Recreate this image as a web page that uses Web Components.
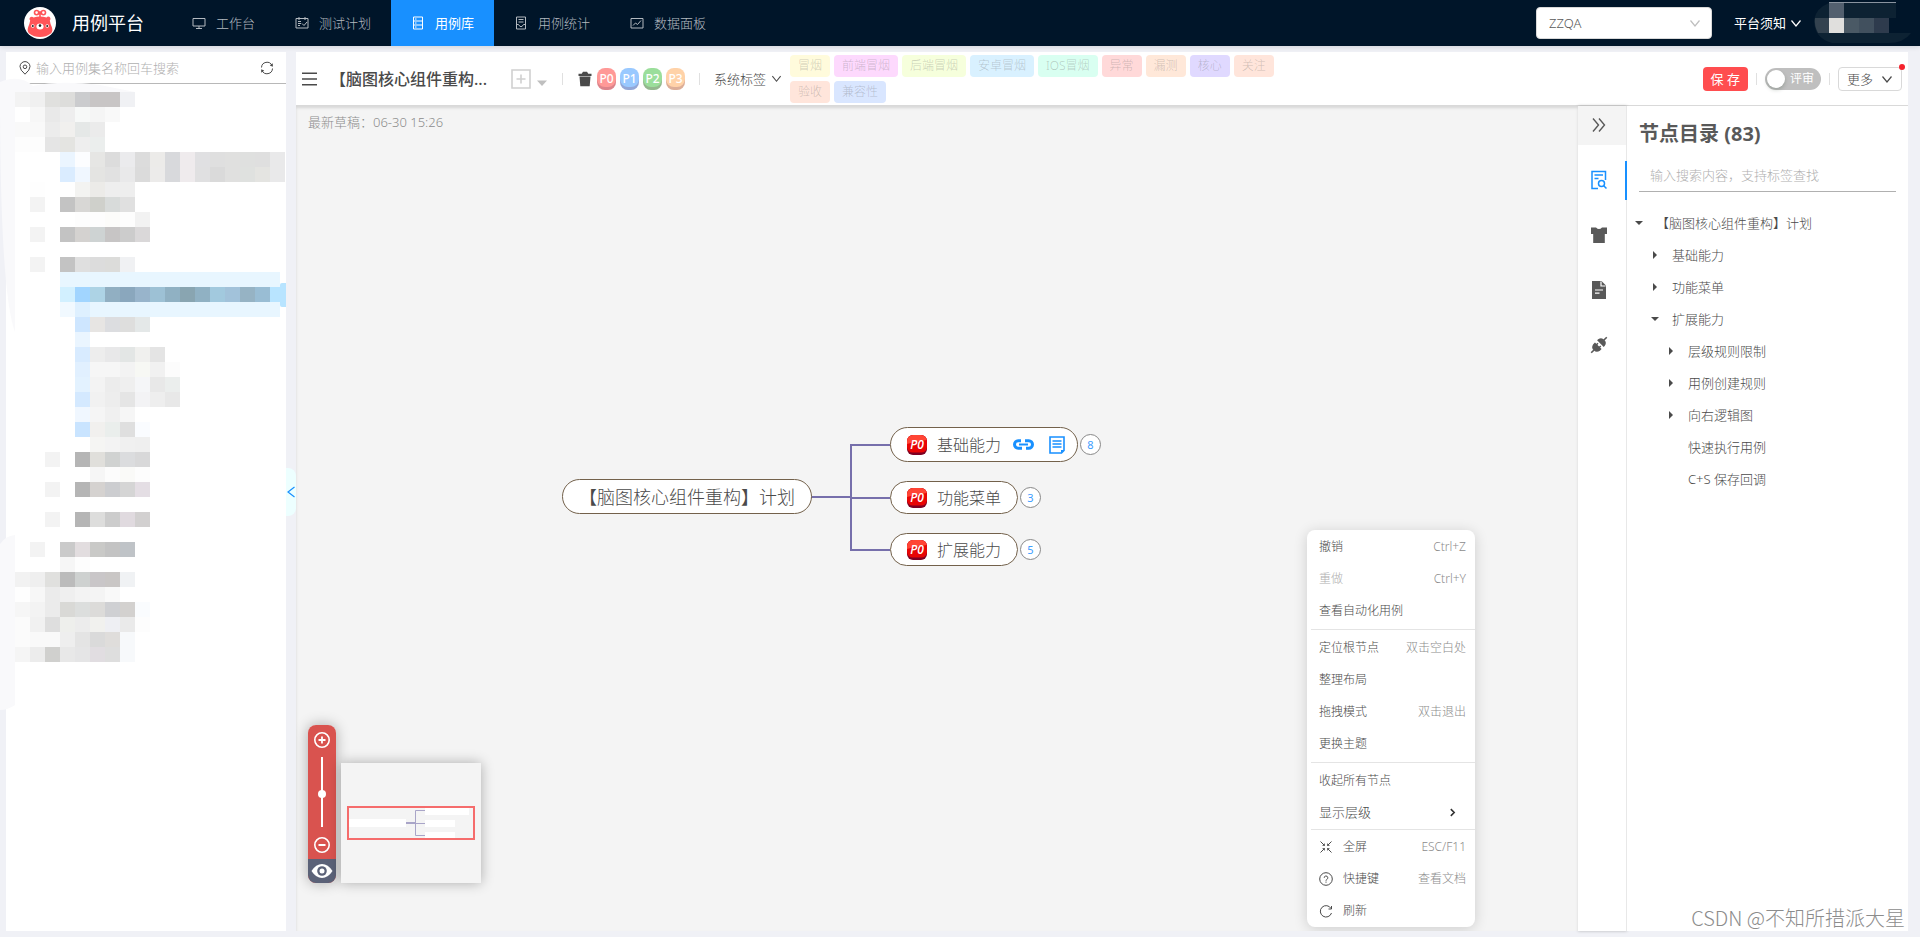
<!DOCTYPE html>
<html lang="zh-CN">
<head>
<meta charset="utf-8">
<title>用例平台</title>
<style>
html, body { height: 100%; margin: 0; }
body {
  font: 300 13px/20px "Noto Sans", "Noto Sans CJK SC", sans-serif;
  color: #4a4a4a;
  background: #f0f1f6;
}
</style>
</head>
<body>
<case-app></case-app>

<script>
const define = (name, html, setup) => {
  const tpl = document.createElement('template');
  tpl.innerHTML = `<style>*{box-sizing:border-box} button,input,select{font:inherit;color:inherit;margin:0;padding:0;border:0;background:none;outline:0} button{cursor:pointer} a{color:inherit;text-decoration:none}</style>` + html;
  customElements.define(name, class extends HTMLElement {
    constructor() {
      super();
      this.attachShadow({ mode: 'open' }).append(tpl.content.cloneNode(true));
    }
    connectedCallback() { if (setup) setup(this, this.shadowRoot); }
  });
};

/* ---------- icons: [viewBox, markup] ---------- */
const S = 'fill="none" stroke="currentColor"';
const ICONS = {
  logo: ['0 0 32 32', `<circle cx="16" cy="16" r="16" fill="#fff"/><g fill="none" stroke="#ff5458" stroke-width="1.6"><circle cx="12.600" cy="5.600" r="2.100"/><circle cx="19.400" cy="5.600" r="2.100"/><path d="M14.500 7l3-2.600M14.500 4.400L17.500 7M16 6v5"/></g><path fill="#ff5458" d="M6 10.500a2.200 2.200 0 0 1 3.500 0q6.500-2 13 0a2.200 2.200 0 0 1 3.600 0q1 1.400-.3 3 .4 3 2 6.500 1.500 4-1 6.500-4.500 3.500-10.800 3.500T5.200 26.500q-2.500-2.500-1-6.500 1.500-3.500 2-6.500-1.500-1.600-.2-3z"/><ellipse cx="16" cy="19.500" rx="3.600" ry="3" fill="#fff"/><circle cx="16" cy="18.600" r="1.300" fill="#222"/><g fill="#fff"><circle cx="8.800" cy="19" r="1.700"/><circle cx="23.200" cy="19" r="1.700"/></g><g fill="#222"><circle cx="8.800" cy="19" r="1"/><circle cx="23.200" cy="19" r="1"/></g>`],
  desktop: ['0 0 14 14', `<path ${S} d="M1 2.500h12v7.500H1zM7 10v2.500M4 12.500h6"/>`],
  schedule: ['0 0 14 14', `<path ${S} d="M1 2.500h12v9.500H1zM4 1v3M10 1v3M3 5.500h3M3 7.500h3M3 9.500h2M7 7.500l2 2 3-3.500"/>`],
  database: ['0 0 14 14', `<path ${S} d="M2.500 1h9v12h-9zM2.500 5h9M2.500 9h9M4 3h1.500M4 7h1.500M4 11h1.500"/>`],
  stats: ['0 0 14 14', `<path ${S} d="M2.500 1h9v12h-9zM4.500 3.500h5M4.500 6h5M2.500 8.500h2l1.500 2h2l1.500-2h2"/>`],
  chart: ['0 0 14 14', `<path ${S} d="M1 2.500h12v9.500H1zM3 9.500l2.500-2.500 2 1.500 3.500-4"/>`],
  down: ['0 0 12 12', `<path ${S} stroke-width="1.200" d="M1.500 3.500L6 9l4.500-5.500"/>`],
  left: ['0 0 12 12', `<path ${S} stroke-width="1.200" d="M8.500 1L2 6l6.500 5"/>`],
  right: ['0 0 8 8', `<path ${S} stroke-width="1.400" d="M2.500 1l3 3-3 3"/>`],
  pin: ['0 0 14 14', `<path ${S} d="M6 13.200Q1 9 1 5.600a5 5 0 0 1 10 0Q11 9 6 13.200z"/><circle ${S} cx="6" cy="5.800" r="1.800"/>`],
  sync: ['0 0 14 14', `<path ${S} d="M1.500 6.500A5.500 5.500 0 0 1 12 4.500M12.500 7.500A5.500 5.500 0 0 1 2 9.500"/><path fill="currentColor" d="M12.800 2.200v3.600l-3-1.300zM1.200 11.800V8.200l3 1.300z"/>`],
  menu: ['0 0 16 16', `<path ${S} stroke-width="1.600" d="M0 2.200h15M0 8h15M0 13.800h15"/>`],
  plusbox: ['0 0 20 20', `<path ${S} stroke-width="1.600" d="M1 1h18v18H1zM10 5.500v9M5.500 10h9"/>`],
  caret: ['0 0 10 10', `<path fill="currentColor" d="M0 2.500h10L5 8z"/>`],
  trash: ['0 0 14 16', `<path fill="currentColor" d="M.5 2.800h3.200L5 .8h4l1.300 2h3.200V5H.5zM1.500 5.600h11l-.8 9.600H2.300z"/>`],
  search: ['0 0 18 20', `<path ${S} stroke-width="1.500" d="M8 18.500H2v-17h13.500V10M4.500 5h8.500M4.500 8.500h4"/><circle ${S} stroke-width="1.500" cx="11.500" cy="13.500" r="3"/><path ${S} stroke-width="1.500" d="M13.700 15.700l2.800 2.800"/>`],
  shirt: ['0 0 18 18', `<path fill="currentColor" d="M1 1.500h5Q9 4.500 12 1.500h5v6.500h-2.200v9H3.200V8H1z"/>`],
  doc: ['0 0 18 20', `<path fill="currentColor" d="M2 1h9.500L16 5.500V19H2z"/><path fill="none" stroke="#fff" stroke-width="1.200" d="M11 1.500V6h4.500M5 10h8M5 13.200h4.500"/>`],
  plug: ['0 0 18 18', `<g fill="currentColor" transform="rotate(-45 9 9)"><path d="M8 4.300v9.400H5.500Q1.500 13 1.500 9t4-4.700zM11 4.300h1.500q4 .7 4 4.700t-4 4.700H11z"/><path d="M-2 8.200h4v1.600h-4zM16 8.200h4v1.600h-4z"/><path d="M7 6.300h2.500v1.500H7zM7 10.200h2.500v1.500H7z"/></g>`],
  link: ['0 0 21 11', `<path ${S} stroke-width="3" d="M9 9.200H5.200a3.700 3.700 0 0 1 0-7.400H8M12 1.800h3.800a3.700 3.700 0 0 1 0 7.400H13"/><path ${S} stroke-width="2" d="M6 5.500h9"/>`],
  note: ['0 0 16 18', `<path ${S} stroke-width="1.600" d="M1 1h14v13.500L12.500 17H1z"/><path ${S} stroke-width="1.300" d="M3.500 5h9M3.500 8h9M3.500 11h9"/><path fill="currentColor" d="M12 14h3L12 17z"/>`],
  p0: ['0 0 20 20', `<defs><clipPath id="c"><rect width="20" height="20" rx="6"/></clipPath></defs><g clip-path="url(#c)"><path fill="#7d0022" d="M0 0h20v20H0z"/><rect width="20" height="17.500" rx="5.500" fill="#e80505"/><path fill="#ff4535" d="M0 0h20v5Q10 6 0 9z"/></g>`],
  full: ['0 0 14 14', `<path ${S} d="M1.500 1.500l4 4M12.500 1.500l-4 4M1.500 12.500l4-4M12.500 12.500l-4-4"/><path ${S} stroke-width=".8" d="M5.500 3.500v2h-2M8.500 3.500v2h2M5.500 10.500v-2h-2M8.500 10.500v-2h2"/>`],
  help: ['0 0 14 14', `<circle ${S} cx="7" cy="7" r="6.300"/><path ${S} d="M5.200 5.800a1.800 1.800 0 1 1 2.600 1.600Q7 7.800 7 8.700M7 9.600v1.100"/>`],
  reload: ['0 0 14 14', `<path ${S} d="M12 4.500A5.700 5.700 0 1 0 12.500 9M12.500 2v3H9.500"/>`],
  dbl: ['0 0 14 14', `<path ${S} stroke-width="1.400" d="M1 .5L6.500 7 1 13.500M7 .5L12.500 7 7 13.500"/>`],
  zoomin: ['0 0 18 18', `<circle ${S} stroke-width="1.600" cx="9" cy="9" r="7.200"/><path ${S} stroke-width="1.800" d="M9 5.500v7M5.500 9h7"/>`],
  zoomout: ['0 0 18 18', `<circle ${S} stroke-width="1.600" cx="9" cy="9" r="7.200"/><path ${S} stroke-width="1.800" d="M5.500 9h7"/>`],
  eye: ['0 0 22 16', `<path fill="currentColor" d="M.5 8Q5 1 11 1t10.500 7Q17 15 11 15T.5 8z"/><circle cx="11" cy="8" r="4.800" fill="#5b6278"/><circle cx="11" cy="8" r="2.500" fill="currentColor"/>`],
};
define('app-icon', `<style>
:host{display:inline-flex;flex:none;width:14px;height:14px}
svg{width:100%;height:100%;overflow:visible}
</style><svg aria-hidden="true"></svg>`, (el, root) => {
  const [box, body] = ICONS[el.getAttribute('name')];
  const svg = root.querySelector('svg');
  svg.setAttribute('viewBox', box);
  svg.innerHTML = body;
});
const makeIcon = name => {
  const icon = document.createElement('app-icon');
  icon.setAttribute('name', name);
  return icon;
};

/* ---------- header ---------- */
define('nav-item', `<style>
:host{display:flex}
a{display:flex;align-items:center;gap:10px;padding:0 20px;height:46px;color:#b4bac0}
:host([active]) a{background:#1890ff;color:#fff;font-weight:400}
</style><a href="#"><slot></slot></a>`, (el, root) => {
  root.querySelector('a').prepend(makeIcon(el.getAttribute('icon')));
});
define('app-header', `<style>
:host{display:flex;align-items:center;height:46px;background:#001529;color:#fff;padding:0 9px 0 24px;box-shadow:0 1px 5px rgba(0,21,41,.14);position:relative}
.logo{width:32px;height:32px}
h1{margin:0 28px 0 16px;font-size:18px;line-height:24px;font-weight:400}
nav{display:flex;flex:1}
.team{position:relative;display:flex;align-items:center;width:176px}
select{appearance:none;width:100%;height:32px;padding:0 12px;background:#fff;border:1px solid #d9d9d9;border-radius:4px;color:#595959}
.team app-icon{position:absolute;right:11px;color:#bfbfbf;pointer-events:none}
.team app-icon,.note app-icon{width:12px;height:12px}
.note{display:flex;align-items:center;gap:4px;margin:0 12px 0 22px;font-weight:400}
.user{width:97px;height:42px}
</style>
<app-icon class="logo" name="logo"></app-icon><h1>用例平台</h1>
<nav><nav-item icon="desktop">工作台</nav-item><nav-item icon="schedule">测试计划</nav-item><nav-item icon="database" active>用例库</nav-item><nav-item icon="stats">用例统计</nav-item><nav-item icon="chart">数据面板</nav-item></nav>
<label class="team"><select aria-label="团队"><option>ZZQA</option></select><app-icon name="down"></app-icon></label>
<button class="note">平台须知<app-icon name="down"></app-icon></button>
<svg class="user" viewBox="0 0 97 42"><path fill="#0d2233" d="M15 1L82 0V16H75V31L97 31Q90 41 74 41H18Q0 36 0 18Q2 6 15 1z"/><path fill="#53606f" d="M15 1h15v15H15z"/><path fill="#8a94a0" d="M15 0h67v1H15z"/><path fill="#33424f" d="M1 16h14v15H4Q0 24 1 16z"/><path fill="#e0dfdd" d="M15 16h15v15H15z"/><path fill="#4a5965" d="M30 16h15v15H30z"/><path fill="#41505e" d="M45 16h15v15H45z"/><path fill="#2e3b4d" d="M60 16h15v15H60z"/></svg>`);

/* ---------- case tree panel ---------- */
/* each entry: row, first column, cell colours; one cell is 15px square */
const CELLS = `0 1 f3f3f3 f0f0f0 e0e0de dddddb cbccce c8c5c5 c8c5c5 f0f1f4
1 2 f7f7f7 e9e9e9 eeeeee f7f9f8 f5f5f5 f9f9f9
2 1 f9f9f9 f9f9f9 ececec f1f0ee e5e8e7 ebebeb
3 1 fdfdfd fdfdfd e5e5e5 e4e4e1 eeeeee ebeeed
4 4 ebf5ff fcfdff e6e6e4 dcdcdc ebebed dcdcdc ecebe9 d8d9dc efebed e0e0e2 dfdfdf e0e0df dfe0df dfdfdf e9e9ea
5 4 daecff f0f7ff e4e4e2 e1e1e1 e9e9ea dbdbdb ecebea d8d9dc efebed e0e0e1 dadada e0e0df dfe1df e4e4e1 e9e9ea
6 2 fefefe ffffff fefefe f3f3f1 ecebe8 eeeeee eeeeee
7 2 f3f3f3 ffffff c3c3c3 d8d7d5 cfd0cb d8dbda e0e0e0
8 5 fdfdfd fdfdfd fcfcfa fdfdfd f2f2f2
9 2 f3f3f3 ffffff c3c3c3 d4d2d0 ced3d3 c7c5c5 cccccc dad8d9
11 2 f3f3f3 ffffff c3c3c3 dfdfdf dcdcdc dcdcda f0f1f3
13 4 d2f0ff a1d5ff add3e5 91afc2 8aa7bd 98b4cb 9dc1d5 90b1c3 89a5b1 90b1c3 a2c9de a2c2da 96b3c4 99bdd4 b8e4ff
14 4 f1f9ff def0ff
15 5 cee6ff e7e5e3 dcdde0 dededd e4e8e8
16 5 eaf5ff
17 5 d8ebff ededed e8e8e9 e3e6e5 f0f0ee e4e4e4
18 5 e1f0ff f6f6f6 f6f6f6 f3f3f3 f7f8f4 f1f1f1 fcfcfc
19 5 e3f2ff f3f3f3 ececec efefef f5f6f8 e8e8e8 ebeeed
20 5 d4e9ff f1f1f1 ededed e5e5e5 f3f3f5 eeeeee e8e8e8
21 5 f0f7ff f5f5f5 f0f0f0 f6f6f6
22 5 c9e4ff f1f0ee eaeeec dfdfdf fafcff
23 6 f5f5f3 f3f3f3 f0f0f0 efefef
24 3 f3f3f3 ffffff b5b5b5 e0dfdb d0d2d1 dbdcde d8d8d9
25 6 f6f6f6 fcfcfc fafaf8 fdfdfd
26 3 f3f3f3 ffffff b5b5b5 d5d2d0 cccdd0 d5d5d5 e4dee4
28 3 f3f3f3 ffffff b5b5b5 dddddc cccccc e0dadf d2d0d0
30 2 f3f3f3 ffffff cacaca e2dddf c9c9c7 c3c3c3 bfc3c7
31 4 f6f6f6 fdfdfd
32 1 f2f2f2 efefef e0e0de bbbbbb ced1d0 c9c6c8 c9c6c5 f0f2f4
33 1 fefefe f7f7f7 ebebeb efefef f3f3f3 f4f4f4 f9f9f9
34 1 f6f6f6 f3f3f3 ebebeb d9d9d6 dcdedd dcdbd9 cfd0d3 d3d1cf fafcfe
35 1 fbfbfb f1f1f1 dedede eeefec ececec f1f1ee eeeff3 eaeaea fdfdfd
36 1 fbfbfb f9f9f9 f9f9f9 eeeeee e4e4e4 dadada dfdddb f7f9fb
37 1 f5f5f5 ececec d0d0ce e8e8e8 e5e5e6 e1dde1 dedede f7f9fb`;
define('case-tree', `<style>
:host{display:flex;flex-direction:column;background:#fff}
label{display:flex;align-items:center;gap:3px;height:31px;padding:0 12px 0 13px}
input{flex:1;min-width:0;height:24px}
input::placeholder{color:#b0b0b0;opacity:1}
hr{margin:0 0 0 22px;border:0;border-top:1px solid #b8b8b8;width:auto}
svg{display:block;flex:1;width:100%;overflow:visible}
</style>
<label><app-icon name="pin"></app-icon><input aria-label="用例集" placeholder="输入用例集名称回车搜索"><app-icon name="sync"></app-icon></label>
<hr>
<svg aria-hidden="true"><g transform="translate(-6 8)"><path fill="#f9f9fb" d="M0-10Q20-18 33-6 60-12 100-7L135 0V10H15V240Q0 200 0 0z"/><path fill="#f9f9fb" d="M0 452Q5 444 15 443V613Q8 618 0 618z"/><path fill="#e8f6ff" d="M60 180h220v45H60z"/><g id="cells" shape-rendering="crispEdges"></g><path fill="#b8e4ff" d="M286 191v24h-4q-2 0-2-2v-20q0-2 2-2z"/></g></svg>`, (el, root) => {
  root.querySelector('#cells').innerHTML = CELLS.split('\n').map(line => {
    const [row, col, ...colors] = line.split(' ');
    return colors.map((c, i) => `<rect x="${(+col + i) * 15}" y="${row * 15}" width="15" height="15" fill="#${c}"/>`).join('');
  }).join('');
});

/* ---------- toolbar ---------- */
define('priority-badge', `<style>
:host{display:flex}
button{width:19px;height:22px;border-radius:8px;background:var(--c);box-shadow:inset 0 -3px 0 rgba(90,20,60,.28);color:#fff;font-size:12px;line-height:20px;font-weight:500;opacity:.75;text-align:center}
</style><button><slot></slot></button>`);
define('tag-chip', `<style>
:host{display:flex}
button{height:22px;padding:0 8px;border-radius:4px;background:var(--c);color:rgba(89,89,89,.3);font-size:12px;line-height:22px}
</style><button><slot></slot></button>`);
define('tool-bar', `<style>
:host{display:flex;align-items:center;height:54px;background:#fff;border-bottom:1px solid #d9d9d9;padding:0 6px}
button{display:flex;align-items:center}
.menu app-icon{width:16px;height:16px}
h2{margin:0 21px 0 12px;width:160px;font-size:16px;line-height:24px;font-weight:500;white-space:nowrap}
.add{gap:6px;color:#d0d0d0}.add app-icon{width:20px;height:20px}.add .c{width:10px;height:10px;margin-top:8px;color:#bfbfbf}
i{width:1px;height:12px;background:#e0e0e0;flex:none}
.add + i{margin-left:15px}
.pri{display:flex;align-items:center;gap:4px;margin:0 14px 0 15px}
.pri app-icon{width:14px;height:16px;margin-right:1px}
.sys{gap:5px;margin-left:14px;margin-right:8px}.sys app-icon{width:11px;height:11px}
.tags{display:flex;flex-wrap:wrap;gap:4px;width:500px}
.right{display:flex;align-items:center;gap:8px;margin-left:auto}
.save{height:24px;padding:0 8px;background:#ff4d4f;color:#fff;border-radius:4px;font-weight:400}
.switch{position:relative;display:flex;align-items:center;justify-content:flex-end;width:56px;height:22px;padding:1px 7px 0;border-radius:11px;background:#bfbfbf;color:#fff;font-size:12px;font-weight:400}
.switch input{appearance:none;position:absolute;left:2px;top:2px;width:18px;height:18px;border-radius:9px;background:#fff;box-shadow:0 2px 4px rgba(0,35,11,.2)}
.more{position:relative;height:24px;width:64px;justify-content:space-between;padding:0 8px;border:1px solid #d9d9d9;border-radius:4px}
.more app-icon{width:12px;height:12px}
.more::after{content:"";position:absolute;right:-4px;top:-4px;width:6px;height:6px;border-radius:3px;background:#f5222d}
</style>
<button class="menu" aria-label="菜单"><app-icon name="menu"></app-icon></button>
<h2>【脑图核心组件重构...</h2>
<button class="add" aria-label="新增"><app-icon name="plusbox"></app-icon><app-icon class="c" name="caret"></app-icon></button>
<i></i>
<div class="pri"><button aria-label="删除"><app-icon name="trash"></app-icon></button><priority-badge style="--c:#ff7875">P0</priority-badge><priority-badge style="--c:#78b7ff">P1</priority-badge><priority-badge style="--c:#7ad47a">P2</priority-badge><priority-badge style="--c:#ffc48c">P3</priority-badge></div>
<i></i>
<button class="sys">系统标签<app-icon name="down"></app-icon></button>
<div class="tags"><tag-chip style="--c:#fffbdc">冒烟</tag-chip><tag-chip style="--c:#fdd9fd">前端冒烟</tag-chip><tag-chip style="--c:#f6ffdc">后端冒烟</tag-chip><tag-chip style="--c:#d9f1ff">安卓冒烟</tag-chip><tag-chip style="--c:#d9fff1">IOS冒烟</tag-chip><tag-chip style="--c:#ffd9d9">异常</tag-chip><tag-chip style="--c:#ffe8d9">漏测</tag-chip><tag-chip style="--c:#e0d9ff">核心</tag-chip><tag-chip style="--c:#ffe5db">关注</tag-chip><tag-chip style="--c:#ffe5db">验收</tag-chip><tag-chip style="--c:#d9e6ff">兼容性</tag-chip></div>
<div class="right"><button class="save">保 存</button><i></i><label class="switch"><input type="checkbox" role="switch">评审</label><i></i><button class="more">更多<app-icon name="down"></app-icon></button></div>`);

/* ---------- mind map ---------- */
define('mind-node', `<style>
:host{position:absolute;display:flex;align-items:center;gap:2px}
.box{display:flex;align-items:center;gap:10px;height:33px;padding:0 16px;border:1px solid #73614b;border-radius:18px;background:#fff;font-size:16px;line-height:24px;white-space:nowrap}
:host([root]) .box,:host([tall]) .box{height:35px}
:host([tall]) .box{padding-right:12px;gap:12px}
:host([tall]) .p{margin-right:-2px}
:host([root]) .box{font-size:18px;padding:0 16px}
.p{position:relative;display:none;width:20px;height:20px;align-items:center;justify-content:center;color:#fff;font:italic 600 12px/20px "Open Sans",sans-serif}
.p app-icon{position:absolute;inset:0;width:20px;height:20px}
.p span{position:relative}
:host([count]) .p{display:flex}
.n{display:none;width:21px;height:21px;border:1px solid #888;border-radius:11px;background:#fff;color:#409eff;font-size:11px;line-height:19px;text-align:center;font-weight:400}
:host([count]) .n{display:block}
</style><div class="box"><span class="p"><app-icon name="p0"></app-icon><span>P0</span></span><slot></slot><slot name="extra"></slot></div><span class="n"></span>`, (el, root) => {
  const n = root.querySelector('.n'), p = root.querySelector('.p');
  if (el.hasAttribute('count')) n.textContent = el.getAttribute('count'); else { n.remove(); p.remove(); }
});
define('zoom-panel', `<style>
:host{display:flex;align-items:flex-end;gap:5px}
.bar{display:flex;flex-direction:column;align-items:center;width:28px;border-radius:8px;overflow:hidden;background:#d9534f;color:#fff}
.wrap{border-radius:8px;box-shadow:0 0 14px rgba(0,0,0,.3)}
button{display:flex;justify-content:center;align-items:center;width:28px;height:29px}
.bar app-icon{width:18px;height:18px}
input{appearance:none;writing-mode:vertical-lr;width:8px;height:70px;margin:3px 0;background:linear-gradient(#fff,#fff) center/2px 100% no-repeat}
input::-webkit-slider-thumb{appearance:none;width:8px;height:8px;border-radius:4px;background:#fff}
.eye{height:24px;background:#5b6278}
.bar .eye app-icon{width:22px;height:16px}
.mini{width:140px;height:120px;background:#f4f4f4;box-shadow:0 0 12px rgba(0,0,0,.3)}
.mini svg{display:block}
</style><div class="wrap"><div class="bar"><button aria-label="放大"><app-icon name="zoomin"></app-icon></button><input type="range" aria-label="缩放" value="53"><button aria-label="缩小"><app-icon name="zoomout"></app-icon></button><button class="eye" aria-label="导航"><app-icon name="eye"></app-icon></button></div></div>
<div class="mini"><svg width="140" height="120"><g fill="#fff"><path d="M8 56h57v8H8zM84 45h44v7H84zM84 57h30v7H84zM84 69h30v7H84z"/></g><path fill="none" stroke="#a9a5c8" d="M84 47.500h-9.500v25H84M75 60.500h9"/><path stroke="#a9a5c8" stroke-width="2" d="M65 60h10"/><rect x="7" y="44" width="126" height="32" fill="none" stroke="#f56c6c" stroke-width="2"/></svg></div>`);

define('menu-row', `<style>
:host{display:flex}
button{display:flex;align-items:center;width:100%;height:32px;padding:0 9px 0 12px;font-size:12px;line-height:20px}
app-icon{margin-right:10px}
.k{margin-left:auto;color:#8c8c8c}
:host([disabled]) button{color:#b0b0b0}
:host([large]) button{font-size:13px;padding-bottom:2px}
.k app-icon{width:9px;height:9px;margin:0 9px 0 0;color:#333}
</style><button><slot></slot><span class="k"></span></button>`, (el, root) => {
  const b = root.querySelector('button'), k = root.querySelector('.k');
  if (el.hasAttribute('icon')) b.prepend(makeIcon(el.getAttribute('icon')));
  if (el.hasAttribute('large')) k.append(makeIcon('right'));
  else k.textContent = el.getAttribute('hint') || '';
});
define('context-menu', `<style>
:host{display:block;width:168px;padding-top:1px;background:#fff;border-radius:8px;box-shadow:0 2px 14px rgba(0,0,0,.16)}
hr{margin:2px 0 2px 4px;border:0;border-top:1px solid #e4e4e4}
hr.t{margin:0 0 1px 4px}
</style>
<menu-row hint="Ctrl+Z">撤销</menu-row><menu-row hint="Ctrl+Y" disabled>重做</menu-row><menu-row>查看自动化用例</menu-row><hr>
<menu-row hint="双击空白处">定位根节点</menu-row><menu-row>整理布局</menu-row><menu-row hint="双击退出">拖拽模式</menu-row><menu-row>更换主题</menu-row><hr>
<menu-row>收起所有节点</menu-row><menu-row large>显示层级</menu-row><hr class="t">
<menu-row icon="full" hint="ESC/F11">全屏</menu-row><menu-row icon="help" hint="查看文档">快捷键</menu-row><menu-row icon="reload">刷新</menu-row>`);
define('mind-canvas', `<style>
:host{position:relative;display:block;background:#f4f4f4;overflow:hidden;box-shadow:inset 0 2px 3px rgba(0,0,0,.12)}
.draft{margin:0;padding:6px 12px;color:#8c8c8c}
.lines{position:absolute;left:0;top:0;width:100%;height:100%}
zoom-panel{position:absolute;left:12px;bottom:48px}
context-menu{position:absolute;left:1011px;top:424px}
.e{display:flex;gap:15px;align-items:center;color:#1890ff}
.e app-icon{width:21px;height:11px}
.e app-icon + app-icon{width:16px;height:18px}
</style>
<p class="draft">最新草稿：06-30 15:26</p>
<svg class="lines" aria-hidden="true"><path fill="none" stroke="#766fab" stroke-width="2" d="M515 391h40M594 339h-39v105h39M555 392h39"/></svg>
<mind-node root style="left:266px;top:373px">【脑图核心组件重构】计划</mind-node>
<mind-node tall count="8" style="left:594px;top:321px">基础能力<span slot="extra" class="e"><app-icon name="link"></app-icon><app-icon name="note"></app-icon></span></mind-node>
<mind-node count="3" style="left:594px;top:375px">功能菜单</mind-node>
<mind-node count="5" style="left:594px;top:427px">扩展能力</mind-node>
<zoom-panel></zoom-panel>
<context-menu></context-menu>`);

/* ---------- right side ---------- */
define('side-rail', `<style>
:host{display:flex;flex-direction:column;gap:16px;width:49px;background:#fff;border-right:1px solid #e8e8e8;box-shadow:0 0 3px rgba(0,0,0,.25)}
button{position:relative;display:flex;align-items:center;justify-content:center;height:39px;padding:0 6px 2px 0;color:#595959}
.top{background:#f4f4f4}
.on{color:#1890ff}
.on::after{content:"";position:absolute;right:-1px;top:0;width:2px;height:39px;background:#1890ff}
app-icon{width:18px;height:20px}.top app-icon{width:14px;height:14px}
</style>
<button class="top" aria-label="收起"><app-icon name="dbl"></app-icon></button><button class="on" aria-label="目录"><app-icon name="search"></app-icon></button><button aria-label="主题"><app-icon name="shirt"></app-icon></button><button aria-label="文档"><app-icon name="doc"></app-icon></button><button aria-label="插件"><app-icon name="plug"></app-icon></button>`);
define('tree-item', `<style>
:host{display:flex;height:32px}
button{display:flex;align-items:center;gap:13px;padding-left:calc(8px + 16px * var(--l))}
.a{width:8px;height:8px;display:flex}
.a::before{content:"";margin:auto;border:4px solid transparent;border-right:0;border-left:4px solid #4a4a4a}
:host([open]) .a::before{border:4px solid transparent;border-bottom:0;border-top:4px solid #4a4a4a}
:host([leaf]) .a::before{visibility:hidden}
</style><button><span class="a"></span><slot></slot></button>`, el => el.style.setProperty('--l', el.getAttribute('level')));
define('node-outline', `<style>
:host{display:block;width:281px;background:#fff}
h2{margin:0;padding:16px 12px;font-size:20px;line-height:24px;font-weight:700;color:#595959}
input{display:block;width:257px;height:30px;margin:0 12px 15px;padding:0 11px 4px;border-bottom:1px solid #b0b0b0}
input::placeholder{color:#b0b0b0;opacity:1}
</style>
<h2>节点目录 (83)</h2><input aria-label="搜索节点" placeholder="输入搜索内容，支持标签查找">
<tree-item level="0" open>【脑图核心组件重构】计划</tree-item><tree-item level="1">基础能力</tree-item><tree-item level="1">功能菜单</tree-item><tree-item level="1" open>扩展能力</tree-item><tree-item level="2">层级规则限制</tree-item><tree-item level="2">用例创建规则</tree-item><tree-item level="2">向右逻辑图</tree-item><tree-item level="2" leaf>快速执行用例</tree-item><tree-item level="2" leaf>C+S 保存回调</tree-item>`);

/* ---------- page ---------- */
define('case-app', `<style>
:host{display:flex;flex-direction:column;min-height:100vh}
main{flex:1;display:flex;padding:6px 12px 6px 6px}
case-tree{width:280px;flex:none}
.gap{display:flex;align-items:center;width:10px;flex:none}
.gap button{width:10px;height:48px;border-radius:0 8px 8px 0;background:#edffff;color:#1890ff;display:flex;align-items:center}
.gap app-icon{width:12px;height:12px}
.work{flex:1;min-width:0;display:flex;flex-direction:column}
.body{flex:1;display:flex}
mind-canvas{flex:1}
.mark{position:absolute;right:15px;bottom:5px;font-size:20px;line-height:28px;font-family:"Noto Sans CJK SC",sans-serif;color:#8c8c8c;text-shadow:1px 1px 1px #fff}
</style>
<app-header></app-header>
<main><case-tree></case-tree><div class="gap"><button aria-label="收起面板"><app-icon name="left"></app-icon></button></div>
<div class="work"><tool-bar></tool-bar><div class="body"><mind-canvas></mind-canvas><side-rail></side-rail><node-outline></node-outline></div></div></main>
<div class="mark">CSDN @不知所措派大星</div>`);
</script>
</body>
</html>
